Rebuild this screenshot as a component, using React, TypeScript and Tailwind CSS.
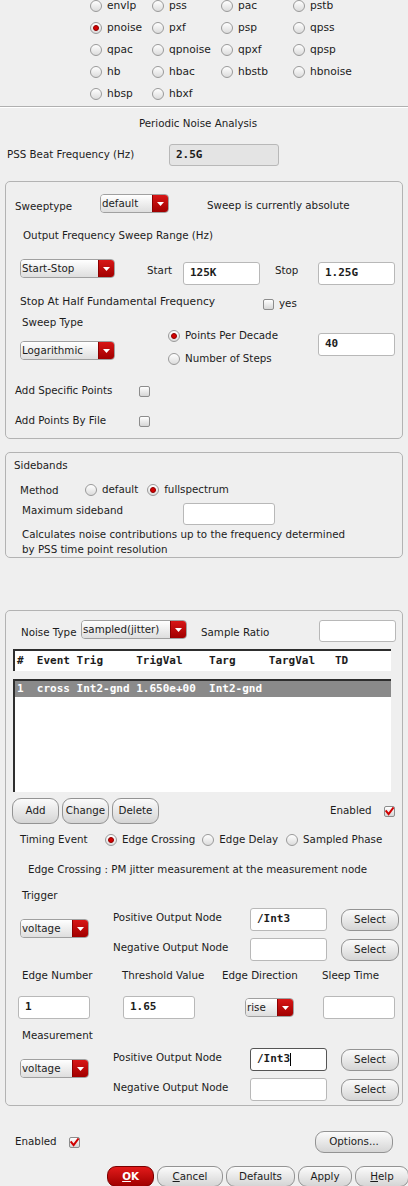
import React from "react";

const SANS = "font-['DejaVu_Sans',sans-serif] text-[10.3px] text-[#1c1c1c]";
const MONO = "font-['DejaVu_Sans_Mono',monospace] text-[11px] font-bold text-[#1c1c1c]";

function Radio({ checked = false }: { checked?: boolean }) {
  return (
    <span className="relative inline-block w-[12px] h-[12px] shrink-0 rounded-full border border-[#9a9a9a] bg-linear-to-b from-white to-[#dcdcdc]">
      {checked && (
        <span className="absolute left-[2px] top-[2px] w-[6px] h-[6px] rounded-full bg-[#d60000] border border-[#8a0000]" />
      )}
    </span>
  );
}

function RadioItem({ checked = false, label, gap = "gap-[5px]" }: { checked?: boolean; label: string; gap?: string }) {
  return (
    <div className={`flex items-center ${gap}`}>
      <Radio checked={checked} />
      <span className="whitespace-nowrap">{label}</span>
    </div>
  );
}

function Check({ checked = false }: { checked?: boolean }) {
  return (
    <span className="relative inline-block w-[11px] h-[11px] shrink-0 rounded-[2px] border border-[#8c8c8c] bg-linear-to-b from-white to-[#d6d6d6]">
      {checked && (
        <svg className="absolute left-[0px] top-[0px]" width="9" height="9" viewBox="0 0 9 9">
          <path d="M1.2 4.2 L3.6 7.2 L8 1.2" fill="none" stroke="#d00000" strokeWidth="2" strokeLinecap="square" />
        </svg>
      )}
    </span>
  );
}

function Dropdown({ w, label }: { w: string; label: string }) {
  return (
    <div className={`flex h-[19px] ${w} shrink-0 rounded-[4px] border border-[#a0a0a0] overflow-hidden`}>
      <div className="flex-1 flex items-center pl-[1px] pb-[1px] bg-linear-to-b from-white to-[#dedede] whitespace-nowrap leading-none">
        {label}
      </div>
      <div className="w-[16px] flex items-center justify-center bg-linear-to-b from-[#d81616] to-[#a10000] border-l border-[#8a0000]">
        <svg width="7" height="4" viewBox="0 0 7 4">
          <path d="M0 0 H7 L3.5 4 Z" fill="#ffffff" />
        </svg>
      </div>
    </div>
  );
}

function Input({ w, value = "", bg = "bg-white", focus = false, h = "h-[23px]" }: { w: string; value?: string; bg?: string; focus?: boolean; h?: string }) {
  return (
    <div
      className={`${w} ${h} shrink-0 ${bg} rounded-[3px] border ${focus ? "border-[#555]" : "border-[#b8b8b8]"} flex items-center pl-[6px] ${MONO}`}
    >
      <span className="whitespace-pre">{value}</span>
      {focus && <span className="inline-block w-[1px] h-[13px] bg-black" />}
    </div>
  );
}

function Btn({ w, h = "h-[22px]", children, red = false }: { w: string; h?: string; children: React.ReactNode; red?: boolean }) {
  return (
    <div
      className={`${w} ${h} shrink-0 flex items-center justify-center rounded-[9px] border ${
        red
          ? "border-[#7a0000] bg-linear-to-b from-[#e21a1a] to-[#a00000] text-white font-bold"
          : "border-[#939393] bg-linear-to-b from-[#fbfbfb] to-[#d5d5d5]"
      } whitespace-nowrap`}
    >
      {children}
    </div>
  );
}

const topRadios: [string, boolean][][] = [
  [["envlp", false], ["pss", false], ["pac", false], ["pstb", false]],
  [["pnoise", true], ["pxf", false], ["psp", false], ["qpss", false]],
  [["qpac", false], ["qpnoise", false], ["qpxf", false], ["qpsp", false]],
  [["hb", false], ["hbac", false], ["hbstb", false], ["hbnoise", false]],
  [["hbsp", false], ["hbxf", false]],
];

export default function App() {
  return (
    <div className={`w-[408px] h-[1186px] overflow-hidden bg-[#efefef] ${SANS}`}>
      {/* top analysis radio grid */}
      <div className="mt-[-5px] pl-[90px] text-[10.67px]">
        {topRadios.map((row, i) => (
          <div key={i} className="h-[22px] grid grid-cols-[62px_69px_72px_100px] items-center">
            {row.map(([l, c]) => (
              <RadioItem key={l} label={l} checked={c} />
            ))}
          </div>
        ))}
      </div>
      <div className="mt-[1px] h-[1px] bg-[#b0b0b0]" />
      <div className="h-[1px] bg-white" />

      {/* title */}
      <div className="h-[32px] flex items-center justify-center pr-[12px]">Periodic Noise Analysis</div>

      {/* PSS beat */}
      <div className="mt-[4px] flex items-center h-[22px]">
        <span className="pl-[7px] w-[169px]">PSS Beat Frequency (Hz)</span>
        <Input w="w-[110px]" h="h-[22px]" value="2.5G" bg="bg-[#e4e4e4]" />
      </div>

      {/* Sweep panel */}
      <div className="mt-[15px] mx-[5px] h-[258px] rounded-[5px] border border-[#b3b3b3]">
        <div className="mt-[12px] h-[19px] flex items-start">
          <span className="pl-[9px] w-[94px] mt-[5px]">Sweeptype</span>
          <Dropdown w="w-[69px]" label="default" />
          <span className="ml-[38px] mt-[4px]">Sweep is currently absolute</span>
        </div>
        <div className="mt-[15px] h-[16px] flex items-center pl-[17px]">Output Frequency Sweep Range (Hz)</div>
        <div className="mt-[15px] h-[25px] flex items-start pl-[14px]">
          <Dropdown w="w-[95px]" label="Start-Stop" />
          <span className="ml-[32px] mt-[4px] w-[36px]">Start</span>
          <div className="mt-[3px]">
            <Input w="w-[77px]" value="125K" />
          </div>
          <span className="ml-[15px] mt-[4px] w-[43px]">Stop</span>
          <div className="mt-[3px]">
            <Input w="w-[77px]" value="1.25G" />
          </div>
        </div>
        <div className="mt-[10px] h-[16px] flex items-center pl-[14px]">
          <span className="w-[243px] text-[10.67px]">Stop At Half Fundamental Frequency</span>
          <div className="mt-[4px] flex items-center gap-[5px]">
            <Check />
            <span>yes</span>
          </div>
        </div>
        <div className="mt-[5px] flex items-start">
          <div className="pl-[14px] w-[162px]">
            <div className="h-[16px] flex items-center pl-[2px]">Sweep Type</div>
            <div className="mt-[10px]">
              <Dropdown w="w-[95px]" label="Logarithmic" />
            </div>
          </div>
          <div className="mt-[13px] w-[150px]">
            <div className="h-[16px] flex items-center">
              <RadioItem checked label="Points Per Decade" gap="gap-[5px]" />
            </div>
            <div className="mt-[7px] h-[16px] flex items-center">
              <RadioItem label="Number of Steps" />
            </div>
          </div>
          <div className="mt-[18px]">
            <Input w="w-[77px]" value="40" />
          </div>
        </div>
        <div className="mt-[16px] h-[16px] flex items-center pl-[9px]">
          <span className="w-[124px]">Add Specific Points</span>
          <Check />
        </div>
        <div className="mt-[14px] h-[16px] flex items-center pl-[9px]">
          <span className="w-[124px]">Add Points By File</span>
          <Check />
        </div>
      </div>

      {/* Sidebands */}
      <div className="mt-[13px] mx-[5px] h-[106px] rounded-[5px] border border-[#b3b3b3]">
        <div className="mt-[5px] h-[16px] flex items-center pl-[8px]">Sidebands</div>
        <div className="mt-[7px] h-[17px] flex items-center pl-[14px]">
          <span className="w-[65px] mt-[2px]">Method</span>
          <RadioItem label="default" />
          <div className="ml-[9px]">
            <RadioItem checked label="fullspectrum" />
          </div>
        </div>
        <div className="mt-[5px] h-[22px] flex items-center pl-[16px]">
          <span className="w-[161px] mt-[-6px]">Maximum sideband</span>
          <Input w="w-[92px]" h="h-[22px]" />
        </div>
        <div className="mt-[2px] pl-[16px] leading-[15px]">
          Calculates noise contributions up to the frequency determined
          <br />
          by PSS time point resolution
        </div>
      </div>

      {/* Noise panel */}
      <div className="mt-[52px] mx-[5px] h-[496px] rounded-[5px] border border-[#b3b3b3]">
        <div className="mt-[9px] h-[22px] flex items-start pl-[15px]">
          <span className="w-[60px] mt-[5px]">Noise Type</span>
          <Dropdown w="w-[106px]" label="sampled(jitter)" />
          <span className="ml-[14px] mt-[5px] w-[118px]">Sample Ratio</span>
          <Input w="w-[77px]" h="h-[22px]" />
        </div>
        <div className="mt-[7px] ml-[7px] w-[378px] h-[22px] bg-white border-t-2 border-l-2 border-[#2e2e2e] flex items-center pl-[2px]">
          <span className={`${MONO} whitespace-pre`}>{"#  Event Trig     TrigVal    Targ     TargVal   TD"}</span>
        </div>
        <div className="mt-[8px] ml-[7px] w-[378px] h-[113px] bg-white border-t-2 border-l-2 border-[#2e2e2e]">
          <div className="h-[16px] bg-[#8a8a8a] flex items-center pl-[2px]">
            <span className={`${MONO} !text-white whitespace-pre`}>{"1  cross Int2-gnd 1.650e+00  Int2-gnd"}</span>
          </div>
        </div>
        <div className="mt-[6px] h-[26px] flex items-center pl-[6px]">
          <div className="flex gap-[3px]">
            <Btn w="w-[47px]" h="h-[26px]">Add</Btn>
            <Btn w="w-[47px]" h="h-[26px]">Change</Btn>
            <Btn w="w-[47px]" h="h-[26px]">Delete</Btn>
          </div>
          <span className="ml-[171px] w-[54px]">Enabled</span>
          <Check checked />
        </div>
        <div className="mt-[8px] h-[16px] flex items-center pl-[14px]">
          <span className="w-[85px]">Timing Event</span>
          <RadioItem checked label="Edge Crossing" />
          <div className="ml-[7px]">
            <RadioItem label="Edge Delay" />
          </div>
          <div className="ml-[8px]">
            <RadioItem label="Sampled Phase" />
          </div>
        </div>
        <div className="mt-[14px] h-[16px] flex items-center pl-[22px]">
          Edge Crossing : PM jitter measurement at the measurement node
        </div>
        <div className="mt-[10px] h-[16px] flex items-center pl-[16px]">Trigger</div>
        <NodeBlock />
        <div className="mt-[7px] h-[16px] flex items-center">
          <span className="pl-[16px] w-[116px]">Edge Number</span>
          <span className="w-[100px]">Threshold Value</span>
          <span className="w-[100px]">Edge Direction</span>
          <span>Sleep Time</span>
        </div>
        <div className="mt-[12px] h-[23px] flex items-start">
          <div className="ml-[12px]">
            <Input w="w-[72px]" value="1" />
          </div>
          <div className="ml-[33px]">
            <Input w="w-[72px]" value="1.65" />
          </div>
          <div className="ml-[50px] mt-[2px]">
            <Dropdown w="w-[49px]" label="rise" />
          </div>
          <div className="ml-[29px]">
            <Input w="w-[72px]" />
          </div>
        </div>
        <div className="mt-[9px] h-[16px] flex items-center pl-[16px]">Measurement</div>
        <NodeBlock focus />
      </div>

      {/* footer */}
      <div className="mt-[25px] h-[22px] flex items-center">
        <span className="pl-[15px] w-[69px]">Enabled</span>
        <Check checked />
        <div className="ml-[235px]">
          <Btn w="w-[78px]">Options...</Btn>
        </div>
      </div>
      <div className="mt-[13px] flex pl-[107px] gap-[3px]">
        <Btn w="w-[47px]" h="h-[21px]" red>
          <span className="underline">O</span>K
        </Btn>
        <Btn w="w-[66px]" h="h-[21px]">
          <span className="underline">C</span>ancel
        </Btn>
        <Btn w="w-[69px]" h="h-[21px]">Defaults</Btn>
        <Btn w="w-[54px]" h="h-[21px]">Apply</Btn>
        <Btn w="w-[54px]" h="h-[21px]">
          <span className="underline">H</span>elp
        </Btn>
      </div>
    </div>
  );
}

function NodeBlock({ focus = false }: { focus?: boolean }) {
  return (
    <div className="mt-[4px] flex items-start">
      <div className="ml-[14px] mt-[11px] w-[93px]">
        <Dropdown w="w-[69px]" label="voltage" />
      </div>
      <div>
        <div className="h-[23px] flex items-center">
          <span className="w-[137px] mt-[-4px]">Positive Output Node</span>
          <Input w="w-[77px]" value="/Int3" focus={focus} />
          <div className="ml-[14px]">
            <Btn w="w-[58px]">Select</Btn>
          </div>
        </div>
        <div className="mt-[7px] h-[23px] flex items-center">
          <span className="w-[137px] mt-[-4px]">Negative Output Node</span>
          <Input w="w-[77px]" />
          <div className="ml-[14px]">
            <Btn w="w-[58px]">Select</Btn>
          </div>
        </div>
      </div>
    </div>
  );
}
